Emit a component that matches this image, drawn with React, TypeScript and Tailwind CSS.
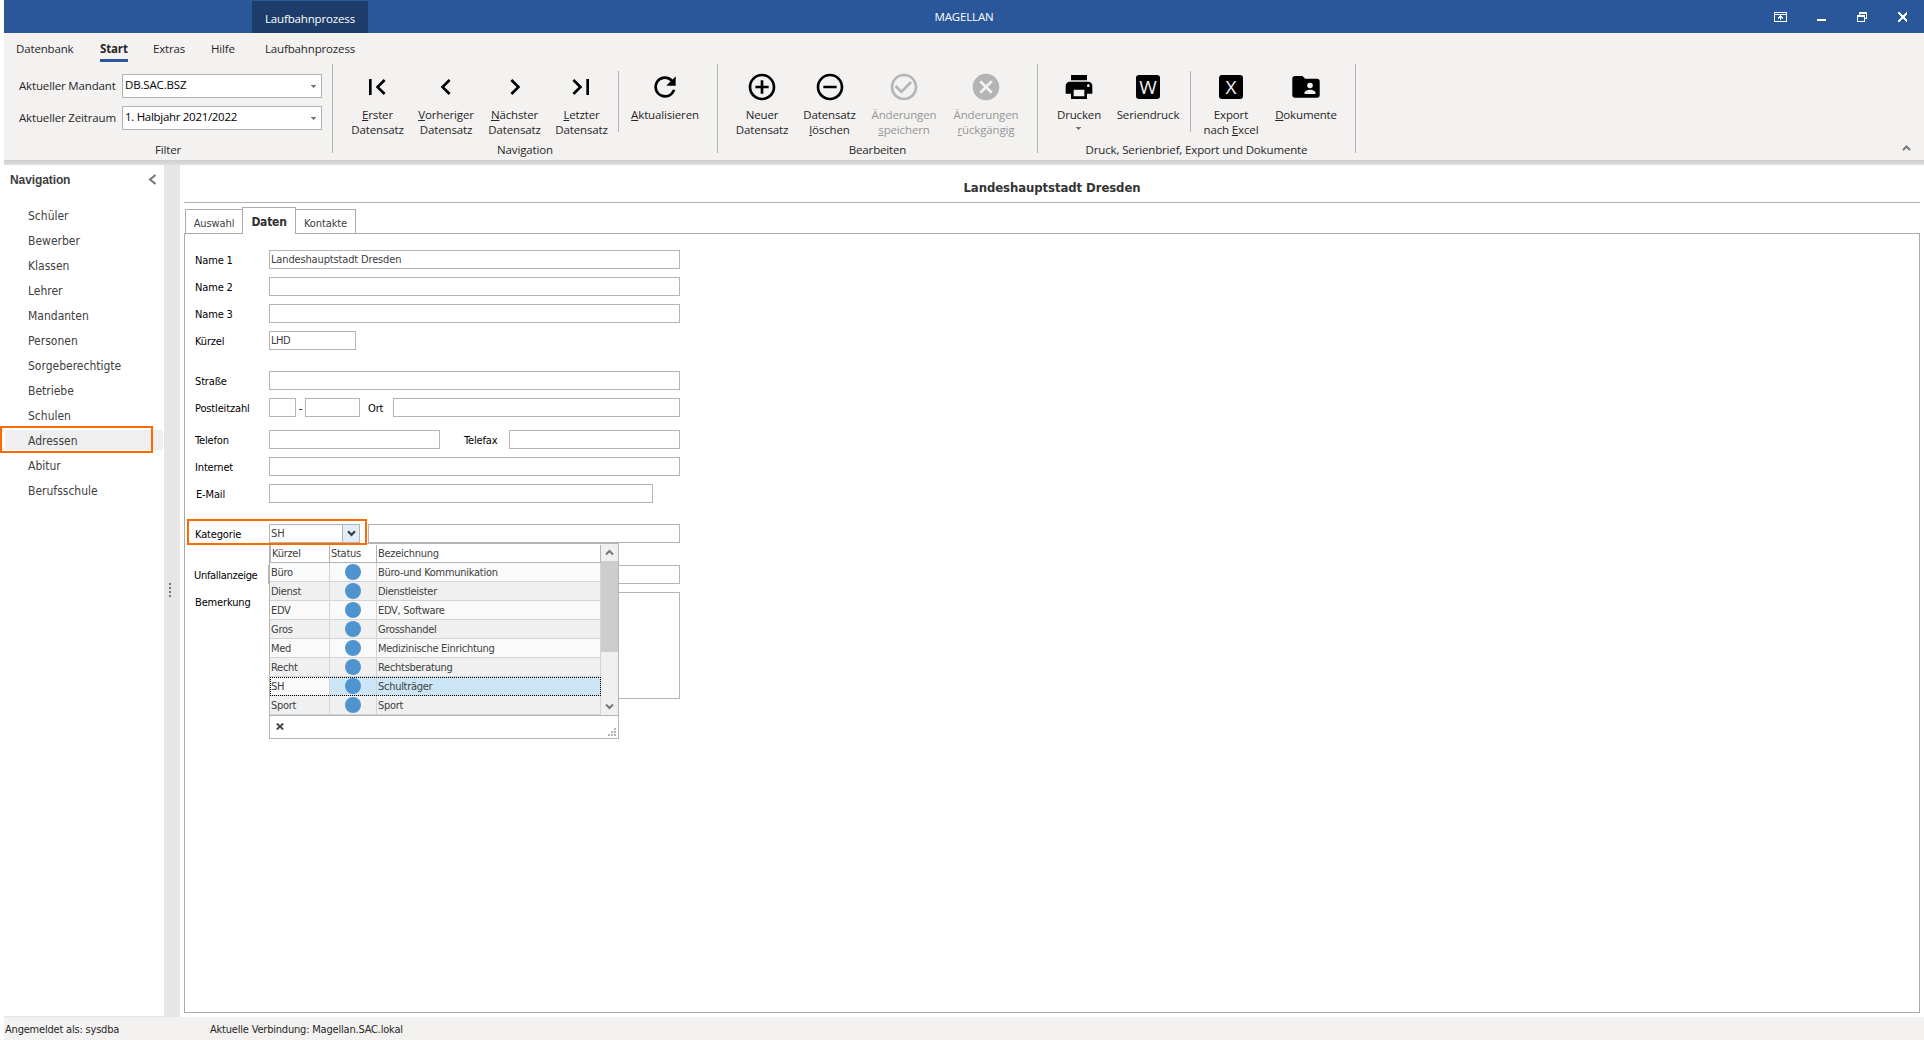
import React from "react";
import {
  MdAddCircleOutline,
  MdCancel,
  MdCheckCircleOutline,
  MdChevronLeft,
  MdChevronRight,
  MdFirstPage,
  MdLastPage,
  MdOutlineRemoveCircleOutline,
  MdPrint,
  MdRefresh,
} from "react-icons/md";

const navItems = [
  { name: "Schüler", cls: "" },
  { name: "Bewerber", cls: "" },
  { name: "Klassen", cls: "" },
  { name: "Lehrer", cls: "" },
  { name: "Mandanten", cls: "" },
  { name: "Personen", cls: "" },
  { name: "Sorgeberechtigte", cls: "" },
  { name: "Betriebe", cls: "" },
  { name: "Schulen", cls: "" },
  { name: "Adressen", cls: "bg-[#efefef]" },
  { name: "Abitur", cls: "" },
  { name: "Berufsschule", cls: "" },
];

const categories = [
  { code: "Büro", label: "Büro-und Kommunikation" },
  { code: "Dienst", label: "Dienstleister" },
  { code: "EDV", label: "EDV, Software" },
  { code: "Gros", label: "Grosshandel" },
  { code: "Med", label: "Medizinische Einrichtung" },
  { code: "Recht", label: "Rechtsberatung" },
  { code: "SH", label: "Schulträger" },
  { code: "Sport", label: "Sport" },
];

function Arrow({ className = "" }) {
  return (
    <svg width="5" height="3" viewBox="0 0 5 3" className={className} shapeRendering="crispEdges">
      <path d="M0 0h5v1H0zM1 1h3v1H1zM2 2h1v1H2z" fill="#777" />
    </svg>
  );
}

function LetterBox({ letter }: { letter: string }) {
  return (
    <div className="flex h-6 w-6 items-center justify-center rounded-[3px] bg-black font-['Open_Sans'] text-[19px] leading-none font-medium text-[#f3f2f1]">
      {letter}
    </div>
  );
}

function FolderUser() {
  return (
    <svg width="28" height="22" viewBox="0 0 28 22">
      <path d="M3 0h7.500l2.700 2.700H25a2.700 2.700 0 0 1 2.700 2.700V19a2.700 2.700 0 0 1-2.700 2.700H3A2.700 2.700 0 0 1 .3 19V2.700A2.700 2.700 0 0 1 3 0z" fill="#000" />
      <circle cx="18" cy="9.500" r="2.800" fill="#f3f2f1" />
      <path d="M12.500 18v-1.300c0-1.900 3.600-2.900 5.500-2.900s5.500 1 5.500 2.900V18z" fill="#f3f2f1" />
    </svg>
  );
}

type RibbonButtonProps = {
  width: string;
  icon: React.ReactNode;
  children: React.ReactNode;
  disabled?: boolean;
};

function RibbonButton({ width, icon, children, disabled }: RibbonButtonProps) {
  return (
    <div className={`${width} flex shrink-0 flex-col items-center ${disabled ? "text-[#969696]" : "text-[#262626]"}`}>
      <div className={`flex h-8 items-center justify-center ${disabled ? "text-[#b4b4b4]" : "text-black"}`}>{icon}</div>
      <div className="mt-1 text-center leading-[15px] whitespace-nowrap">{children}</div>
    </div>
  );
}

function RibbonGroup({ width, title, children }: { width: string; title: string; children: React.ReactNode }) {
  return (
    <div className={`${width} flex h-[89px] shrink-0 flex-col border-r border-[#b1b1b1]`}>
      <div className="flex h-[78px] shrink-0 pt-[7px]">{children}</div>
      <div className="-mt-px shrink-0 text-center leading-[18px]">{title}</div>
    </div>
  );
}

function Field({ className = "", children }: { className?: string; children?: React.ReactNode }) {
  return (
    <div className={`${className} h-[19px] shrink-0 border border-[#b4b4b4] bg-white pl-px leading-[17px] text-[#404040]`}>
      {children}
    </div>
  );
}

function Row({
  label,
  className = "",
  labelClass = "",
  children,
}: {
  label: string;
  className?: string;
  labelClass?: string;
  children?: React.ReactNode;
}) {
  return (
    <div className={`${className} flex h-[19px] pl-[10px]`}>
      <div className={`${labelClass} w-[74px] shrink-0 leading-[22px] text-black`}>{label}</div>
      {children}
    </div>
  );
}

function TitleBar() {
  return (
    <div className="relative flex h-[33px] items-center justify-center bg-[#2a569a] text-white">
      <div className="absolute top-px left-[248px] flex h-8 w-[116px] items-center justify-center bg-[#1e3c6b] pt-[3px]">
        Laufbahnprozess
      </div>
      <div>MAGELLAN</div>
      <svg className="absolute top-3 right-[17px]" width="133" height="10" shapeRendering="crispEdges" fill="#fff">
        <path d="M0 0h13v10H0zM1 1v1h11V1zM1 3v6h11V3z" fillRule="evenodd" />
        <path d="M6 3h1v5H6zM5 4h3v1H5zM4 5h5v1H4zM4 6h1v1H4zM8 6h1v1H8z" />
        <path d="M43 7h9v2h-9z" />
        <path d="M85 0h8v7h-2V6h1V2h-6v1h-1z" />
        <path d="M83 3h8v7h-8zM84 5v4h6V5z" fillRule="evenodd" />
        <path d="M124 0h2v1h1v1h1v1h2V2h1V1h1V0h2v2h-1v1h-1v1h-1v2h1v1h1v1h1v2h-2V9h-1V8h-1V7h-2v1h-1v1h-1v1h-2V8h1V7h1V6h1V4h-1V3h-1V2h-1z" />
      </svg>
    </div>
  );
}

function Ribbon() {
  return (
    <div className="relative h-[127px] bg-[#f3f2f1] text-[#262626]">
      <div className="flex h-[31px] pt-[7px] leading-[18px]">
        <div className="ml-3 w-[84px]">Datenbank</div>
        <div className="w-[53px]">
          <div className="h-[22px] w-7 border-b-3 border-[#2a569a] font-bold">Start</div>
        </div>
        <div className="w-[58px]">Extras</div>
        <div className="w-[54px]">Hilfe</div>
        <div>Laufbahnprozess</div>
      </div>
      <div className="flex">
        <div className="flex h-[89px] w-[329px] shrink-0 flex-col border-r border-[#b1b1b1] pt-[10px]">
          <div className="flex h-8 shrink-0">
            <div className="w-[118px] pl-[15px] leading-6 whitespace-nowrap">Aktueller Mandant</div>
            <div className="flex h-6 w-[200px] items-center justify-between border border-[#b1b1b1] bg-white pr-[5px] pb-[3px] pl-[2px] text-black">
              DB.SAC.BSZ
              <Arrow className="mt-[3px]" />
            </div>
          </div>
          <div className="flex h-8 shrink-0">
            <div className="w-[118px] pl-[15px] leading-6 whitespace-nowrap">Aktueller Zeitraum</div>
            <div className="flex h-6 w-[200px] items-center justify-between border border-[#b1b1b1] bg-white pr-[5px] pb-[3px] pl-[2px] tracking-[-0.3px] text-black">
              1. Halbjahr 2021/2022
              <Arrow className="mt-[3px]" />
            </div>
          </div>
          <div className="mt-[3px] shrink-0 text-center leading-[18px]">Filter</div>
        </div>
        <RibbonGroup width="w-[385px]" title="Navigation">
          <div className="w-[10px]" />
          <RibbonButton width="w-[69px]" icon={<MdFirstPage size={32} className="-ml-0.5" />}>
            <u>E</u>rster<br />Datensatz
          </RibbonButton>
          <RibbonButton width="w-[68px]" icon={<MdChevronLeft size={32} />}>
            <u>V</u>orheriger<br />Datensatz
          </RibbonButton>
          <RibbonButton width="w-[69px]" icon={<MdChevronRight size={32} />}>
            <u>N</u>ächster<br />Datensatz
          </RibbonButton>
          <RibbonButton width="w-[65px]" icon={<MdLastPage size={32} className="-ml-0.5" />}>
            <u>L</u>etzter<br />Datensatz
          </RibbonButton>
          <div className="ml-1 h-[61px] w-px bg-[#b1b1b1]" />
          <RibbonButton width="w-[92px]" icon={<MdRefresh size={32} />}>
            <u>A</u>ktualisieren
          </RibbonButton>
        </RibbonGroup>
        <RibbonGroup width="w-[320px]" title="Bearbeiten">
          <div className="w-[10px]" />
          <RibbonButton width="w-[68px]" icon={<MdAddCircleOutline size={32} />}>
            Neuer<br />Datensatz
          </RibbonButton>
          <RibbonButton width="w-[67px]" icon={<MdOutlineRemoveCircleOutline size={32} />}>
            Datensatz<br /><u>l</u>öschen
          </RibbonButton>
          <RibbonButton width="w-[82px]" icon={<MdCheckCircleOutline size={32} />} disabled>
            Änderungen<br /><u>s</u>peichern
          </RibbonButton>
          <RibbonButton width="w-[82px]" icon={<MdCancel size={32} />} disabled>
            Änderungen<br /><u>r</u>ückgängig
          </RibbonButton>
        </RibbonGroup>
        <RibbonGroup width="w-[318px]" title="Druck, Serienbrief, Export und Dokumente">
          <div className="w-2" />
          <RibbonButton width="w-[66px]" icon={<MdPrint size={32} />}>
            Drucken
            <Arrow className="mx-auto mt-[5px]" />
          </RibbonButton>
          <RibbonButton width="w-[72px]" icon={<LetterBox letter="W" />}>
            Seriendruck
          </RibbonButton>
          <div className="ml-[6px] h-[61px] w-px bg-[#b1b1b1]" />
          <RibbonButton width="w-[80px]" icon={<LetterBox letter="X" />}>
            Export<br />nach <u>E</u>xcel
          </RibbonButton>
          <RibbonButton width="w-[70px]" icon={<FolderUser />}>
            <u>D</u>okumente
          </RibbonButton>
        </RibbonGroup>
      </div>
      <svg className="absolute right-[13px] bottom-[9px]" width="9" height="6" viewBox="0 0 9 6">
        <path d="M1 5l3.500-3.500L8 5" fill="none" stroke="#777" strokeWidth="2" />
      </svg>
    </div>
  );
}

function Sidebar() {
  return (
    <div className="relative w-40 shrink-0 border-b border-[#e6e6e6] bg-white text-xs text-[#404040]">
      <div className="flex h-[30px] items-center pl-[6px] font-['Liberation_Sans'] font-bold tracking-[-0.1px]">
        Navigation
      </div>
      <svg className="absolute top-[9px] left-[144px]" width="9" height="11" viewBox="0 0 9 11">
        <path d="M7.500 1L2 5.500l5.500 4.500" fill="none" stroke="#777" strokeWidth="2" />
      </svg>
      <div className="pt-[10px]">
        {navItems.map((item) => (
          <div key={item.name} className={`${item.cls} mr-px mb-[5px] ml-px h-5 pl-[23px] leading-[22px]`}>
            {item.name}
          </div>
        ))}
      </div>
      <div className="absolute top-[261px] -left-1 h-[27px] w-[153px] border-2 border-[#ff6a00]" />
    </div>
  );
}

function CategoryPopup() {
  return (
    <div className="absolute top-[309px] left-[84px] z-10 h-[196px] w-[350px] border border-[#b4b4b4] bg-white tracking-[-0.28px] text-[#404040]">
      <div className="flex h-[171px]">
        <div className="w-[331px] shrink-0">
          <div className="mt-px flex h-[18px] border-b border-[#b4b4b4] leading-[18px]">
            <div className="w-[60px] border-x border-[#b4b4b4] pl-px">Kürzel</div>
            <div className="w-[47px] border-r border-[#b4b4b4] pl-px">Status</div>
            <div className="flex-1 border-r border-[#b4b4b4] pl-px">Bezeichnung</div>
          </div>
          {categories.map((c, i) => (
            <div
              key={c.code}
              className={`relative flex h-[19px] leading-[20px] ${i % 2 ? "bg-[#f0f0f0]" : "bg-[#fafafa]"}`}
            >
              <div className="w-[60px] border-r border-b border-[#d4d4d4] pl-px">{c.code}</div>
              <div className={`flex w-[47px] justify-center border-r border-b border-[#d4d4d4] ${c.code === "SH" ? "bg-[#cde6f7]" : ""}`}>
                <div className="mt-px h-4 w-4 rounded-full bg-[#4f94cf]" />
              </div>
              <div className={`flex-1 border-r border-b border-[#d4d4d4] pl-px ${c.code === "SH" ? "bg-[#cde6f7]" : ""}`}>
                {c.label}
              </div>
              {c.code === "SH" && <div className="absolute inset-x-0 top-0 bottom-0 border border-dotted border-black" />}
            </div>
          ))}
        </div>
        <div className="flex flex-1 flex-col justify-between bg-[#f0f0f0]">
          <div>
            <div className="flex h-[17px] items-center justify-center">
              <svg width="9" height="7" viewBox="0 0 9 7">
                <path d="M1 5.500L4.500 2 8 5.500" fill="none" stroke="#777" strokeWidth="2" />
              </svg>
            </div>
            <div className="h-[91px] bg-[#cdcdcd]" />
          </div>
          <div className="flex h-[17px] items-center justify-center">
            <svg width="9" height="7" viewBox="0 0 9 7">
              <path d="M1 1.500L4.500 5 8 1.500" fill="none" stroke="#777" strokeWidth="2" />
            </svg>
          </div>
        </div>
      </div>
      <div className="flex h-[23px] items-center justify-between border-t border-[#b4b4b4] pl-[6px]">
        <svg className="-mt-px" width="8" height="7" viewBox="0 0 8 7">
          <path d="M.8.5l6.400 6M7.200.5l-6.400 6" stroke="#404040" strokeWidth="1.800" />
        </svg>
        <svg className="mt-[10px] mr-[2px]" width="8" height="8" fill="#b4b4b4" shapeRendering="crispEdges">
          <path d="M6 0h2v2H6zM3 3h2v2H3zM6 3h2v2H6zM0 6h2v2H0zM3 6h2v2H3zM6 6h2v2H6z" />
        </svg>
      </div>
    </div>
  );
}

function AddressForm() {
  return (
    <div className="relative flex-1 border border-[#aaa] pt-4 tracking-[-0.15px]">
      <Row label="Name 1">
        <Field className="w-[411px]">Landeshauptstadt Dresden</Field>
      </Row>
      <Row label="Name 2" className="mt-2">
        <Field className="w-[411px]" />
      </Row>
      <Row label="Name 3" className="mt-2">
        <Field className="w-[411px]" />
      </Row>
      <Row label="Kürzel" className="mt-2">
        <Field className="w-[87px] tracking-[-0.5px]">LHD</Field>
      </Row>
      <Row label="Straße" className="mt-[21px]">
        <Field className="w-[411px]" />
      </Row>
      <Row label="Postleitzahl" className="mt-2">
        <Field className="w-[27px]" />
        <div className="w-[9px] text-center leading-[22px]">-</div>
        <Field className="w-[55px]" />
        <div className="w-[33px] pl-2 leading-[22px]">Ort</div>
        <Field className="w-[287px]" />
      </Row>
      <Row label="Telefon" className="mt-[13px]">
        <Field className="w-[171px]" />
        <div className="w-[69px] pl-6 leading-[22px]">Telefax</div>
        <Field className="w-[171px]" />
      </Row>
      <Row label="Internet" className="mt-2">
        <Field className="w-[411px]" />
      </Row>
      <Row label="E-Mail" className="mt-2" labelClass="pl-px">
        <Field className="w-[384px]" />
      </Row>
      <Row label="Kategorie" className="mt-[21px]">
        <div className="flex h-[19px] w-[91px] border border-[#b4b4b4] pl-px leading-[17px] text-[#404040]">
          <div className="flex-1">SH</div>
          <div className="flex w-[17px] items-center justify-center border-l border-[#b4b4b4] bg-[#e1eefa]">
            <svg width="9" height="7" viewBox="0 0 9 7">
              <path d="M1 1.200l3.500 3.600L8 1.200" fill="none" stroke="#404040" strokeWidth="2.200" />
            </svg>
          </div>
        </div>
        <Field className="ml-2 w-[312px]" />
      </Row>
      <Row label="Unfallanzeige" className="mt-[22px]" labelClass="-ml-px mr-px tracking-[-0.3px]">
        <Field className="-ml-px w-[412px]" />
      </Row>
      <Row label="Bemerkung" className="mt-2">
        <div className="h-[107px] w-[411px] shrink-0 border border-[#b4b4b4]" />
      </Row>
      <div className="absolute top-[285px] left-[2px] z-20 h-[26px] w-[180px] border-2 border-[#ff6a00]" />
      <CategoryPopup />
    </div>
  );
}

function App() {
  return (
    <div className="flex h-[1040px] w-[1924px] flex-col overflow-hidden bg-white pl-1 font-['Open_Sans',sans-serif] text-[11.5px] tracking-[-0.15px]">
      <TitleBar />
      <Ribbon />
      <div className="h-[5px] bg-linear-to-b from-[#cdcdcd] to-[#dfdfdf]" />
      <div className="flex h-[852px] font-['DejaVu_Sans_Condensed','DejaVu_Sans',sans-serif] text-[11px] tracking-normal [font-stretch:condensed]">
        <Sidebar />
        <div className="flex w-4 shrink-0 flex-col justify-center gap-[2px] bg-[#e6e6e6] pb-[2px] pl-[5px]">
          <div className="h-[2px] w-[2px] bg-[#777]" />
          <div className="h-[2px] w-[2px] bg-[#777]" />
          <div className="h-[2px] w-[2px] bg-[#777]" />
          <div className="h-[2px] w-[2px] bg-[#777]" />
        </div>
        <div className="flex flex-1 flex-col pr-[4px] pb-[4px] pl-1">
          <div className="h-[38px] border-b border-[#b1b1b1] pt-[14px] text-center text-[13px] leading-[18px] font-bold tracking-[-0.08px] text-[#333]">
            Landeshauptstadt Dresden
          </div>
          <div className="relative z-10 -mb-px flex h-[31px] items-end pl-px tracking-[-0.1px] text-[#404040]">
            <div className="h-[25px] w-[58px] border border-[#aaa] bg-white text-center leading-[28px]">Auswahl</div>
            <div className="-ml-px h-[27px] w-[54px] border border-b-0 border-[#aaa] bg-white text-center text-xs leading-[29px] font-bold tracking-[-0.25px] text-[#303030]">
              Daten
            </div>
            <div className="-ml-px h-[25px] w-[61px] border border-[#aaa] bg-white text-center leading-[28px]">Kontakte</div>
          </div>
          <AddressForm />
        </div>
      </div>
      <div className="flex h-[23px] bg-[#f3f2f1] font-['DejaVu_Sans_Condensed','DejaVu_Sans',sans-serif] text-[11px] leading-[26px] tracking-[-0.2px] text-[#262626] [font-stretch:condensed]">
        <div className="w-[206px] pl-px">Angemeldet als: sysdba</div>
        <div>Aktuelle Verbindung: Magellan.SAC.lokal</div>
      </div>
    </div>
  );
}

export default App;
